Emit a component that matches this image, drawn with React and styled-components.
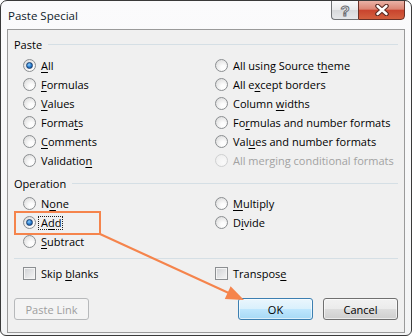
import React from 'react'
import styled, { createGlobalStyle } from 'styled-components'

const GlobalStyle = createGlobalStyle`
  html, body { margin: 0; padding: 0; background: #fff; }
  body {
    font-family: "Segoe UI", "Open Sans", "Noto Sans", sans-serif;
    font-size: 11px;
    color: #000;
  }
`

const pasteOptions = [
  { label: ['', 'A', 'll'], checked: true },
  { label: ['', 'F', 'ormulas'] },
  { label: ['', 'V', 'alues'] },
  { label: ['Forma', 't', 's'] },
  { label: ['', 'C', 'omments'] },
  { label: ['Validatio', 'n', ''] },
  { label: ['All using Source t', 'h', 'eme'] },
  { label: ['All e', 'x', 'cept borders'] },
  { label: ['Column ', 'w', 'idths'] },
  { label: ['Fo', 'r', 'mulas and number formats'] },
  { label: ['Val', 'u', 'es and number formats'] },
  { label: ['All merging conditional formats', '', ''], disabled: true }
]

const operationOptions = [
  { label: ['N', 'o', 'ne'] },
  { label: ['A', 'd', 'd'], checked: true, focused: true },
  { label: ['', 'S', 'ubtract'] },
  { label: ['', 'M', 'ultiply'] },
  { label: ['D', 'i', 'vide'] }
]

const Label = ({ parts, focused }) => (
  <Text focused={focused}>
    {parts[0]}
    {parts[1] && <Accel>{parts[1]}</Accel>}
    {parts[2]}
  </Text>
)

const RadioOption = ({ option }) => (
  <Option disabled={option.disabled}>
    <Radio checked={option.checked} disabled={option.disabled} />
    <Label parts={option.label} focused={option.focused} />
  </Option>
)

const App = () => {
  return (
    <Stage>
      <GlobalStyle />
      <Window>
        <TitleBar>
          <Title>Paste Special</Title>
          <Caption>
            <HelpButton>?</HelpButton>
            <CloseButton>
              <svg width='16' height='12' viewBox='0 0 16 12'>
                <path d='M3.5 2 L12.5 10 M12.5 2 L3.5 10' stroke='#5a2b24' strokeWidth='4.6' strokeLinecap='round' />
                <path d='M3.5 2 L12.5 10 M12.5 2 L3.5 10' stroke='#fff' strokeWidth='2.4' strokeLinecap='round' />
              </svg>
            </CloseButton>
          </Caption>
        </TitleBar>
        <Client>
          <GroupHeader>
            <span>Paste</span>
            <Rule />
          </GroupHeader>
          <OptionGrid rows={6}>
            {pasteOptions.map((option, i) => (
              <RadioOption key={i} option={option} />
            ))}
          </OptionGrid>
          <GroupHeader spaced>
            <span>Operation</span>
            <Rule />
          </GroupHeader>
          <OptionGrid rows={3} tight>
            {operationOptions.map((option, i) => (
              <RadioOption key={i} option={option} />
            ))}
          </OptionGrid>
          <Separator />
          <CheckRow>
            <Option>
              <Checkbox />
              <Text>
                Skip <Accel>b</Accel>lanks
              </Text>
            </Option>
            <Option>
              <Checkbox />
              <Text>
                Transpos<Accel>e</Accel>
              </Text>
            </Option>
          </CheckRow>
          <ButtonRow>
            <Button disabled>Paste Link</Button>
            <Spacer />
            <Button primary>OK</Button>
            <Button>Cancel</Button>
          </ButtonRow>
        </Client>
      </Window>
      <Overlay width='412' height='336' viewBox='0 0 412 336'>
        <rect x='15' y='212' width='85' height='22' fill='none' stroke='#f5844c' strokeWidth='2' />
        <line x1='100' y1='234' x2='232' y2='294.5' stroke='#f5844c' strokeWidth='2' />
        <polygon points='244,300 224.8,299 230.6,286.2' fill='#f5844c' />
      </Overlay>
    </Stage>
  )
}

const Stage = styled.div`
  position: relative;
  width: 412px;
  height: 336px;
`
const Window = styled.div`
  width: 412px;
  height: 336px;
  box-sizing: border-box;
  border: 1px solid #3a3a3a;
  border-radius: 7px 7px 6px 6px;
  background: linear-gradient(#fbfbfc, #f3f4f5);
  padding: 0 6px 2px 6px;
  display: flex;
  flex-direction: column;
  overflow: hidden;
`
const TitleBar = styled.div`
  height: 28px;
  display: flex;
  justify-content: space-between;
  align-items: flex-start;
`
const Title = styled.div`
  margin: 7px 0 0 1px;
  line-height: 16px;
  font-size: 11.5px;
  color: #0f1a2a;
`
const Caption = styled.div`
  display: flex;
  margin-top: -1px;
`
const HelpButton = styled.div`
  width: 27px;
  height: 20px;
  box-sizing: border-box;
  border: 1px solid #6f7274;
  border-right: none;
  border-radius: 0 0 0 4px;
  background: linear-gradient(#fbfbfb, #e9eaeb 50%, #d7d9db 51%, #e6e8ea);
  display: flex;
  align-items: center;
  justify-content: center;
  font-family: "Liberation Sans", sans-serif;
  font-size: 15px;
  font-weight: bold;
  color: #fff;
  -webkit-text-stroke: 1px #6c6f73;
`
const CloseButton = styled.div`
  width: 47px;
  height: 20px;
  box-sizing: border-box;
  border: 1px solid #6a3127;
  border-radius: 0 0 4px 0;
  background: linear-gradient(#eab2a6, #dc8574 45%, #c9442e 52%, #d3603f);
  display: flex;
  align-items: center;
  justify-content: center;
`
const Client = styled.div`
  flex: 1;
  border: 1px solid #9a9a9a;
  background: #f0f0f0;
  padding: 0 6px;
  display: flex;
  flex-direction: column;
`
const GroupHeader = styled.div`
  display: flex;
  align-items: center;
  height: 16px;
  margin-top: ${p => (p.spaced ? '5px' : '6px')};
`
const Rule = styled.div`
  flex: 1;
  height: 1px;
  margin-left: 6px;
  background: #d5dfe5;
`
const OptionGrid = styled.div`
  display: grid;
  grid-template-columns: 192px 1fr;
  grid-template-rows: repeat(${p => p.rows}, 19px);
  grid-auto-flow: column;
  padding-left: 9px;
  margin-top: ${p => (p.tight ? '3px' : '4px')};
`
const Option = styled.div`
  display: flex;
  align-items: center;
  gap: 5px;
  height: 19px;
  white-space: nowrap;
  color: ${p => (p.disabled ? '#a2a2a2' : '#000')};
`
const Text = styled.span`
  line-height: 12px;
  ${p =>
    p.focused &&
    `
    margin-left: -3px;
    padding: 0 1px 0 2px;
    border: 1px dotted #222;
  `}
`
const Radio = styled.span`
  position: relative;
  flex: none;
  width: 13px;
  height: 13px;
  box-sizing: border-box;
  border-radius: 50%;
  border: 1px solid ${p => (p.disabled ? '#cfd0d1' : '#8b8e91')};
  background: ${p =>
    p.disabled
      ? 'radial-gradient(circle at 65% 70%, #fafafa, #ececec)'
      : 'radial-gradient(circle at 65% 70%, #fdfdfd 20%, #e4e4e4 70%, #cfcfcf)'};
  &::after {
    content: '';
    display: ${p => (p.checked ? 'block' : 'none')};
    position: absolute;
    left: 2px;
    top: 2px;
    width: 7px;
    height: 7px;
    box-sizing: border-box;
    border-radius: 50%;
    border: 1px solid #1b3f6e;
    background: radial-gradient(circle at 40% 35%, #8fd0ff, #2b7fd0 50%, #0d3f86);
  }
`
const Accel = styled.span`
  text-decoration: underline;
  text-underline-offset: 2px;
`
const Separator = styled.div`
  height: 1px;
  margin-top: 7px;
  background: #d5dfe5;
`
const CheckRow = styled.div`
  display: grid;
  grid-template-columns: 192px 1fr;
  padding-left: 9px;
  margin-top: 5px;
`
const Checkbox = styled.span`
  flex: none;
  width: 13px;
  height: 13px;
  box-sizing: border-box;
  border: 1px solid #8b8e91;
  box-shadow: inset 0 0 0 1px #f4f4f4;
  background: linear-gradient(135deg, #cfd1d4, #f6f6f6);
`
const ButtonRow = styled.div`
  display: flex;
  gap: 10px;
  margin-top: 15px;
`
const Spacer = styled.div`
  flex: 1;
`
const Button = styled.button`
  width: 75px;
  height: 22px;
  box-sizing: border-box;
  padding: 0;
  font: inherit;
  border-radius: 3px;
  border: 1px solid ${p => (p.disabled ? '#b7b9bb' : p.primary ? '#3c7fb1' : '#707070')};
  color: ${p => (p.disabled ? '#9e9e9e' : '#000')};
  background: ${p =>
    p.disabled
      ? '#f4f4f4'
      : p.primary
      ? 'linear-gradient(#eaf6fd, #d9f0fc 50%, #bee6fd 51%, #a7d9f5)'
      : 'linear-gradient(#f2f2f2, #ebebeb 50%, #dddddd 51%, #cfcfcf)'};
  box-shadow: ${p => (p.disabled ? 'none' : 'inset 0 0 0 1px rgba(255,255,255,0.6)')};
`
const Overlay = styled.svg`
  position: absolute;
  left: 0;
  top: 0;
  pointer-events: none;
`

export default App
